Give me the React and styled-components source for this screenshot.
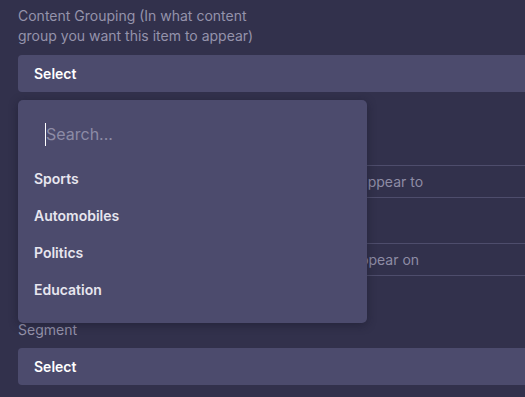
import React from 'react';
import styled, { createGlobalStyle } from 'styled-components';

const Global = createGlobalStyle`
    html, body {
        margin: 0;
        background: #32314c;
        overflow: hidden;
    }
    body {
        font-family: 'Inter', 'Noto Sans', sans-serif;
    }
`

const Page = styled.div `
    position: relative;
    width: 525px;
    height: 397px;
    padding: 6px 0 0 18px;
    box-sizing: border-box;
    overflow: hidden;
`
const Label = styled.div `
    color: #9593ab;
    font-size: 14px;
    line-height: 20px;
    width: 255px;
    margin-top: ${p => p.top || 0}px;
`
const Select = styled.div `
    display: flex;
    align-items: center;
    width: 600px;
    height: 37px;
    margin-top: ${p => p.top || 0}px;
    padding-left: 16px;
    box-sizing: border-box;
    background: #4c4b6d;
    border-radius: 4px;
    color: #fff;
    font-size: 14px;
    font-weight: 600;
`
const Input = styled.div `
    display: flex;
    align-items: center;
    width: 600px;
    height: 33px;
    margin-top: ${p => p.top || 0}px;
    padding-left: 16px;
    box-sizing: border-box;
    border-top: 1px solid #4e4d6c;
    border-bottom: 1px solid #4e4d6c;
    color: #8e8ca5;
    font-size: 14px;
    white-space: nowrap;
`
const Menu = styled.div `
    position: absolute;
    left: 18px;
    top: 100px;
    width: 349px;
    height: 223px;
    background: #4c4b6d;
    border-radius: 5px;
    box-shadow: 0 2px 10px rgba(20, 20, 35, 0.45);
    box-sizing: border-box;
    padding: 22px 0 0 16px;
`
const Search = styled.div `
    display: flex;
    align-items: center;
    height: 24px;
    margin-left: 11px;
    color: #8d8ba6;
    font-size: 16px;
`
const Caret = styled.span `
    width: 1px;
    height: 23px;
    background: #fff;
`
const Options = styled.ul `
    list-style: none;
    margin: 23px 0 0;
    padding: 0;
`
const Option = styled.li `
    height: 37px;
    line-height: 20px;
    color: #e7e6ef;
    font-size: 14px;
    font-weight: 600;
`

function App() {
    return (<Page>
        <Global />
        <Label>Content Grouping (In what content group you want this item to appear)</Label>
        <Select top={9}>Select</Select>
        <Label top={35}>Audience</Label>
        <Input top={18}>Select the audience groups you want this item to appear to</Input>
        <Label top={10}>Placement</Label>
        <Input top={15}>Select the page or section you want this item to appear on</Input>
        <Label top={44}>Segment</Label>
        <Select top={8}>Select</Select>
        <Menu>
            <Search><Caret />Search...</Search>
            <Options>
                <Option>Sports</Option>
                <Option>Automobiles</Option>
                <Option>Politics</Option>
                <Option>Education</Option>
            </Options>
        </Menu>
    </Page>);
}

export default App;
